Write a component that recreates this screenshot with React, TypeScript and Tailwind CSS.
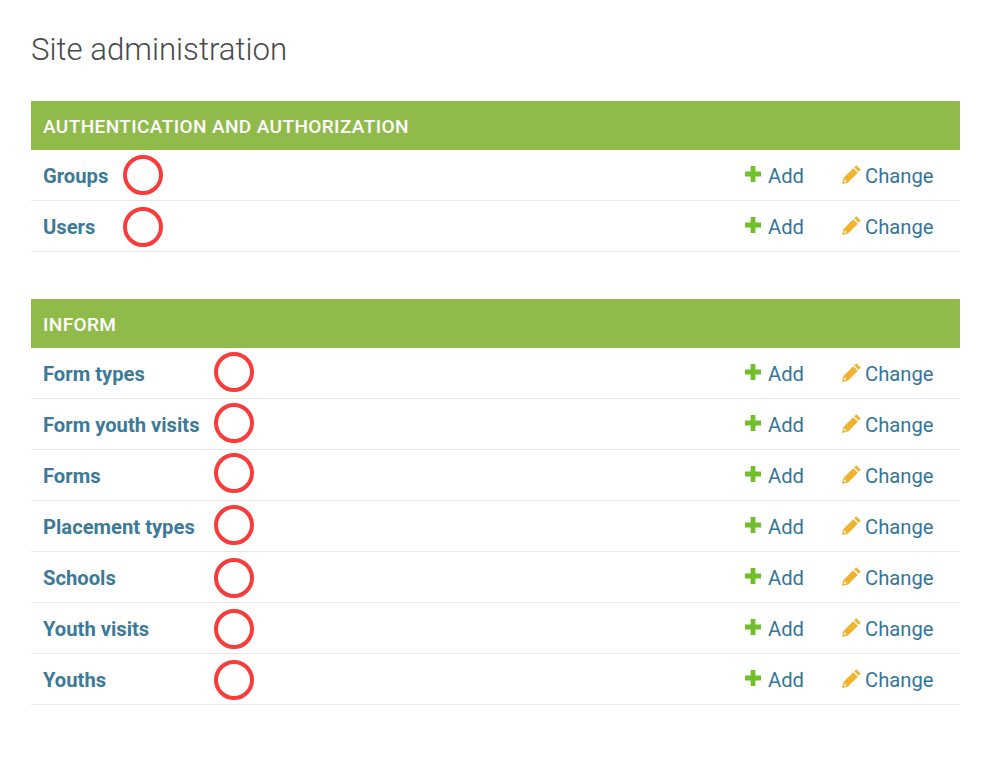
const groups = [
  {
    title: 'Authentication and Authorization',
    circleLeft: 'left-[92px]',
    gap: 'mb-[47px]',
    models: [
      { name: 'Groups', circleTop: 'top-[5px]' },
      { name: 'Users', circleTop: 'top-[6px]' },
    ],
  },
  {
    title: 'Inform',
    circleLeft: 'left-[183px]',
    gap: '',
    models: [
      { name: 'Form types', circleTop: 'top-[4px]' },
      { name: 'Form youth visits', circleTop: 'top-[4px]' },
      { name: 'Forms', circleTop: 'top-[3px]' },
      { name: 'Placement types', circleTop: 'top-[4px]' },
      { name: 'Schools', circleTop: 'top-[6px]' },
      { name: 'Youth visits', circleTop: 'top-[6px]' },
      { name: 'Youths', circleTop: 'top-[6px]' },
    ],
  },
];

function PlusIcon() {
  return (
    <svg viewBox="0 0 16 16" className="mr-[7px] mb-[3px] h-[16px] w-[16px] text-[#70bf2b]">
      <path d="M5.6 0h4.8v5.6H16v4.8h-5.6V16H5.6v-5.6H0V5.6h5.6z" fill="currentColor" />
    </svg>
  );
}

function PencilIcon() {
  return (
    <svg viewBox="0 0 18 18" className="mr-[4px] mb-[2px] h-[19px] w-[19px] text-[#f0b32e]">
      <path d="M13.6 0.2l4.2 4.2-2 2-4.2-4.2zM10.6 3l4.4 4.4-9.2 9.2L0 18l1.4-5.8z" fill="currentColor" />
      <path d="M2.4 13.6l2 2-2.6.6z" fill="#fff" />
    </svg>
  );
}

function ModelRow({ name, circleLeft, circleTop }: { name: string; circleLeft: string; circleTop: string }) {
  return (
    <div className="relative flex h-[51px] items-center border-b border-[#e8e8e8] pt-[2px] pl-[12px]">
      <a className="text-[20.2px] font-bold text-[#3b7a98]">{name}</a>
      {/* red marker drawn over the screenshot */}
      <span
        className={`absolute h-[40px] w-[40px] rounded-full border-[4px] border-[#f83c3c] ${circleLeft} ${circleTop}`}
      />
      <div className="ml-auto flex items-center text-[20.2px] text-[#33769a]">
        <a className="flex w-[97px] items-center">
          <PlusIcon />
          Add
        </a>
        <a className="flex w-[118px] items-center">
          <PencilIcon />
          Change
        </a>
      </div>
    </div>
  );
}

export default function App() {
  return (
    <div className="min-h-[777px] bg-white px-[31px] pt-[29px] font-['Roboto',sans-serif]">
      <h1 className="mb-[30px] text-[31.2px] leading-[42px] font-light text-[#4a4a4a]">Site administration</h1>

      <div className="w-[929px]">
        {groups.map((group) => (
          <div key={group.title} className={group.gap}>
            <div className="flex h-[49px] items-center bg-[#90bb4b] pt-[4px] pl-[12px] text-[19px] font-medium tracking-[0.4px] text-white uppercase">
              {group.title}
            </div>
            {group.models.map((model) => (
              <ModelRow key={model.name} name={model.name} circleLeft={group.circleLeft} circleTop={model.circleTop} />
            ))}
          </div>
        ))}
      </div>
    </div>
  );
}
